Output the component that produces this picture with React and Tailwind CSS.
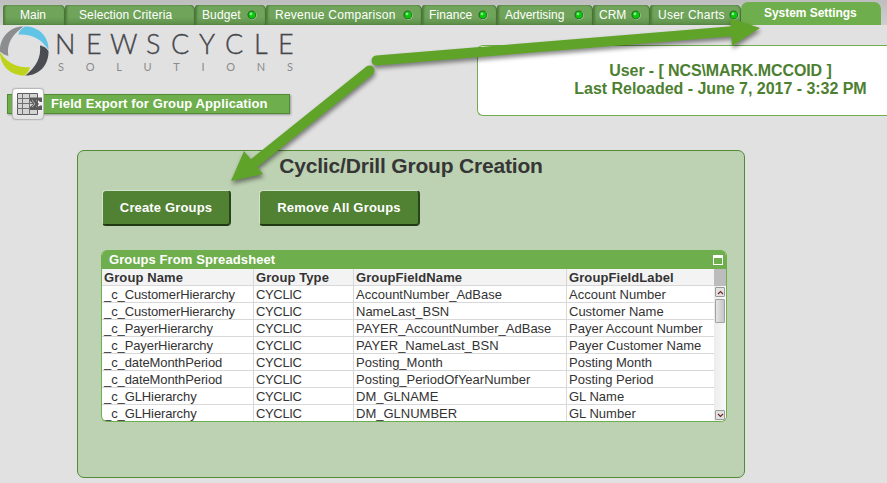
import React from "react";

const tabs = [
  { label: "Main", box: "w-[62px] pl-[17px]", text: "" },
  { label: "Selection Criteria", box: "w-[130px] pl-[14px]", text: "tracking-[0.1px]" },
  { label: "Budget", box: "w-[71px] pl-[7px]", led: "left-[52px]", text: "tracking-[0.1px]" },
  { label: "Revenue Comparison", box: "w-[156px] pl-[9px]", led: "left-[137px]", text: "tracking-[0.25px]" },
  { label: "Finance", box: "w-[75px] pl-[7px]", led: "left-[56px]", text: "tracking-[0.1px]" },
  { label: "Advertising", box: "w-[96px] pl-[8px]", led: "left-[77px]", text: "" },
  { label: "CRM", box: "w-[57px] pl-[6px]", led: "left-[38px]", text: "" },
  { label: "User Charts", box: "w-[91px] pl-[8px]", led: "left-[79px]", text: "tracking-[0.25px]" },
];

const wordmark = [
  ["N", "w-[31px]"], ["E", "w-[24px]"], ["W", "w-[36px]"], ["S", "w-[25px]"], ["C", "w-[28px]"],
  ["Y", "w-[26px]"], ["C", "w-[29px]"], ["L", "w-[24px]"], ["E", "w-[16px]"],
];

const rows = [
  ["_c_CustomerHierarchy", "CYCLIC", "AccountNumber_AdBase", "Account Number"],
  ["_c_CustomerHierarchy", "CYCLIC", "NameLast_BSN", "Customer Name"],
  ["_c_PayerHierarchy", "CYCLIC", "PAYER_AccountNumber_AdBase", "Payer Account Number"],
  ["_c_PayerHierarchy", "CYCLIC", "PAYER_NameLast_BSN", "Payer Customer Name"],
  ["_c_dateMonthPeriod", "CYCLIC", "Posting_Month", "Posting Month"],
  ["_c_dateMonthPeriod", "CYCLIC", "Posting_PeriodOfYearNumber", "Posting Period"],
  ["_c_GLHierarchy", "CYCLIC", "DM_GLNAME", "GL Name"],
  ["_c_GLHierarchy", "CYCLIC", "DM_GLNUMBER", "GL Number"],
];

function Led({ place }) {
  return (
    <svg className={`absolute top-[5px] h-[10px] w-[10px] ${place}`} viewBox="0 0 10 10">
      <circle cx="5.300" cy="5.300" r="4.600" fill="#a3c596" />
      <circle cx="4.800" cy="4.800" r="4.400" fill="#2c6427" />
      <circle cx="5" cy="5" r="3.400" fill="#08c80c" />
      <circle cx="4" cy="3.900" r="1.400" fill="#86f783" />
    </svg>
  );
}

function TabBar() {
  return (
    <nav className="flex h-[25px] items-end bg-linear-to-b from-[#bebebe] to-[#cfcfcf] pl-[3px] text-[12px]">
      {tabs.map((t) => (
        <div key={t.label} className={`relative h-[20px] shrink-0 rounded-tl-[3px] rounded-tr-[5px] bg-linear-to-b from-[#70a45a] from-60% to-[#5d8e49] leading-[20px] whitespace-nowrap text-white shadow-[inset_-1px_0_1px_#456d36,inset_2px_0_2px_#4f7d3d] ${t.box}`}>
          <span className={t.text}>{t.label}</span>
          {t.led && <Led place={t.led} />}
        </div>
      ))}
      <div className="h-[23px] w-[140px] rounded-t-[7px] bg-[#6fae4c] pl-[23px] leading-[23px] font-bold whitespace-nowrap text-white"><span className="tracking-[-0.05px]">System Settings</span></div>
    </nav>
  );
}

function Logo() {
  return (
    <div className="flex h-[51px]">
      <svg className="mt-[1px] h-[50px] w-[49px] shrink-0" viewBox="0 0 49 50">
        <path d="M24 0.500C9 0 -1 13 0 26Q3 29 8.500 30.500Q5 13 24 0.500Z" fill="#8b8d8f" />
        <path d="M18 8.500Q19 3 24.500 0.500C39 0 49 11 48.500 24Q38 7 18 8.500Z" fill="#61c3e6" />
        <path d="M40 19Q46 20 48.500 25C49 39 39 50 25 49.500Q42 37 40 19Z" fill="#4c4d53" />
        <path d="M0 26Q11 43 30.500 41Q29 47 25 49.500C11 50 0 40 0 26Z" fill="#bfd31d" />
        <path d="M24.500 0.500Q19 3 18 8.500M48.500 24.500Q46 20 40 19M25 49.500Q29 47 30.500 41M0 26Q3 29 8.500 30.500" fill="none" stroke="#e8e8e8" strokeWidth="0.700" />
      </svg>
      <div className="flex flex-col pl-[6px] font-[Lato,sans-serif]">
        <div className="mt-[6px] flex h-[25px] text-[27px] leading-[25px] font-light text-[#45464c] [-webkit-text-stroke:0.35px_#45464c]">
          {wordmark.map(([c, w], i) => <span key={i} className={`shrink-0 ${w}`}>{c}</span>)}
        </div>
        <div className="mt-[4px] flex w-[238px] justify-between pl-[3px] text-[11px] leading-[14px] text-[#8b8b8b]">
          {"SOLUTIONS".split("").map((c, i) => <span key={i}>{c}</span>)}
        </div>
      </div>
    </div>
  );
}

function ExportIcon() {
  return (
    <span className="relative flex h-[32px] w-[32px] shrink-0 items-center justify-center rounded-[4px] border border-[#b9b9b9] bg-linear-to-b from-white to-[#e3e3e3] shadow-[0_0_1px_#888]">
      <svg className="h-[24px] w-[28px]" viewBox="0 0 28 24">
        <path d="M3.500 1.500H23.500V22.500H3.500Z" fill="#d4d4d4" stroke="#5c5c5c" />
        <path d="M3 6.500H24M3 11.500H24M3 16.500H24M8.500 1V23M15.500 1V23" stroke="#707070" />
        <path d="M16 5.500H28V10H26L24.500 8.500H22L25 12L22 14.500H24.500L26 13.500H28V18H16V15L19.500 12L16 9Z" fill="#5a5a5a" />
        <path d="M18 8L21 12L18 15" fill="none" stroke="#c8c8c8" strokeWidth="0.800" />
      </svg>
    </span>
  );
}

function Button({ children, size }) {
  return (
    <button className={`h-[36px] rounded-[4px] border-t border-r-2 border-b-2 border-l border-t-[#d3e2cb] border-r-[#264519] border-b-[#1f3a13] border-l-[#d3e2cb] bg-[#518233] text-[13px] font-bold text-white ${size}`}>{children}</button>
  );
}

function Arrow({ up }) {
  return (
    <span className="flex h-[10px] w-[10px] items-center justify-center rounded-[1px] border border-[#999] bg-[#e3e1e1]">
      <svg className="h-[5px] w-[7px]" viewBox="0 0 7 5">
        <path d={up ? "M1 4L3.500 1.500L6 4" : "M1 1L3.500 3.500L6 1"} fill="none" stroke="#6b2929" strokeWidth="1.200" />
      </svg>
    </span>
  );
}

function GroupTable() {
  const cols = "grid grid-cols-[152px_100px_213px_147px]";
  return (
    <section className="mt-[24px] ml-[23px] h-[172px] w-[626px] overflow-hidden rounded-[6px] border border-t-0 border-[#6fae4c] bg-white">
      <div className="flex h-[19px] items-center justify-between bg-[#6fae4c] pr-[3px] pl-[7px] text-[13px] font-bold text-white">
        <span className="tracking-[0.1px]">Groups From Spreadsheet</span>
        <span className="h-[10px] w-[10px] border border-t-[3px] border-white" />
      </div>
      <div className="flex">
        <div className="w-[612px] text-[#333]">
          <div className={`${cols} h-[17px] border-b border-[#d8d8d8] bg-[#f3f3f3] text-[13px] leading-[18px] font-bold`}>
            {["Group Name", "Group Type", "GroupFieldName", "GroupFieldLabel"].map((h, i) => (
              <span key={h} className={`pl-[2px] tracking-[0.1px] ${i < 3 ? "border-r border-[#d8d8d8]" : ""}`}>{h}</span>
            ))}
          </div>
          {rows.map((r, i) => (
            <div key={i} className={`${cols} h-[17px] border-b border-[#d8d8d8] text-[13px] leading-[18px] whitespace-nowrap last:border-b-0`}>
              {r.map((c, j) => <span key={j} className={`pl-[2px] ${j === 0 ? "tracking-[-0.1px]" : j === 1 ? "tracking-[-0.35px]" : "tracking-[0px]"} ${j < 3 ? "border-r border-[#d8d8d8]" : ""}`}>{c}</span>)}
            </div>
          ))}
        </div>
        <div className="flex h-[152px] w-[12px] flex-col items-center bg-linear-to-r from-[#ececec] to-[#fafafa]">
          <div className="h-[17px] w-full bg-[#bcbcbc]" />
          <div className="mt-px"><Arrow up /></div>
          <div className="mt-[2px] h-[24px] w-[10px] rounded-[1px] border border-[#a2a2a2] bg-linear-to-r from-[#e5e5e5] to-[#c5c5c5]" />
          <div className="mt-auto mb-px"><Arrow /></div>
        </div>
      </div>
    </section>
  );
}

export default function App() {
  return (
    <div className="relative h-[483px] w-[887px] overflow-hidden bg-[#e1e1e1] font-['Liberation_Sans',Arial,sans-serif]">
      <TabBar />
      <header className="flex h-[125px]">
        <div className="w-[477px]">
          <Logo />
          <div className="mt-[18px] ml-[7px] flex h-[20px] w-[283px] items-center border border-[#4f8a35] bg-[#6fae4c] pl-[4px] text-[13px] font-bold text-white shadow-[1px_1px_2px_#999]">
            <ExportIcon />
            <span className="ml-[7px] tracking-[0.12px] whitespace-nowrap">Field Export for Group Application</span>
          </div>
        </div>
        <div className="mt-[20px] h-[71px] w-[410px] rounded-l-[6px] border border-r-0 border-[#6fae4c] bg-white pt-[16px] pl-[76px] text-center text-[16px] leading-[18px] font-bold whitespace-nowrap text-[#4c8030]">
          <p className="tracking-[-0.1px]">User - [ NCS\MARK.MCCOID ]</p>
          <p className="tracking-[-0.03px]">Last Reloaded - June 7, 2017 - 3:32 PM</p>
        </div>
      </header>
      <main className="ml-[77px] h-[328px] w-[668px] rounded-[7px] border border-[#518b35] bg-[#bdd1b3]">
        <h1 className="h-[39px] pt-[2px] text-center text-[21px] leading-[25px] font-bold tracking-[-0.18px] text-[#363636]">Cyclic/Drill Group Creation</h1>
        <div className="flex gap-[28px] pl-[24px]">
          <Button size="w-[129px] tracking-[0.15px]">Create Groups</Button>
          <Button size="w-[161px] tracking-[0.2px]">Remove All Groups</Button>
        </div>
        <GroupTable />
      </main>
      <svg className="pointer-events-none absolute inset-0 h-full w-full drop-shadow-[1px_3px_2px_rgba(0,0,0,0.45)]" viewBox="0 0 887 483">
        <path d="M376.500 60.500L735 31M369.500 70.500L253 164" stroke="#60a329" strokeWidth="10" strokeLinecap="round" />
        <path d="M730 18L760 28L732 46ZM244 151L231 181L263 174Z" fill="#60a329" />
      </svg>
    </div>
  );
}
